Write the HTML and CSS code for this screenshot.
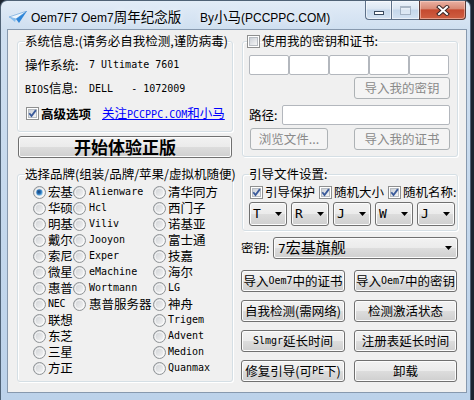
FILE: index.html
```html
<!DOCTYPE html>
<html lang="zh-CN">
<head>
<meta charset="utf-8">
<title>Oem7F7 Oem7周年纪念版</title>
<link rel="stylesheet" href="styles.css">
</head>
<body>
<svg class="defs" aria-hidden="true">
  <defs>
    <linearGradient id="cbIn" x1="0" y1="0" x2="1" y2="1"><stop offset="0" stop-color="#c9ced5"/><stop offset="1" stop-color="#f7f7f7"/></linearGradient>
    <linearGradient id="rdIn" x1="0" y1="0" x2="1" y2="1"><stop offset="0" stop-color="#c9ccd0"/><stop offset="1" stop-color="#fbfbfb"/></linearGradient>
    <radialGradient id="rdDot" cx="0.4" cy="0.4" r="0.65"><stop offset="0" stop-color="#173f73"/><stop offset="0.55" stop-color="#2b78bf"/><stop offset="1" stop-color="#a6dbf7"/></radialGradient>
    <symbol id="cb" viewBox="0 0 13 13">
      <rect x="0.5" y="0.5" width="12" height="12" fill="#fff" stroke="#8e8f8f"/>
      <rect x="2.5" y="2.5" width="8" height="8" fill="url(#cbIn)" stroke="#b7bcc2"/>
    </symbol>
    <symbol id="cbOn" viewBox="0 0 13 13">
      <rect x="0.5" y="0.5" width="12" height="12" fill="#fff" stroke="#8e8f8f"/>
      <rect x="2.5" y="2.5" width="8" height="8" fill="url(#cbIn)" stroke="#b7bcc2"/>
      <path d="M3.3 6.3 L5.5 9.1 L9.9 3.1" fill="none" stroke="#3a5a9a" stroke-width="1.8"/>
    </symbol>
    <symbol id="rd" viewBox="0 0 13 13">
      <circle cx="6.5" cy="6.5" r="6" fill="url(#rdIn)" stroke="#8f9396"/>
      <circle cx="6.5" cy="6.5" r="4.4" fill="none" stroke="#ffffff" stroke-opacity="0.75"/>
    </symbol>
    <symbol id="rdOn" viewBox="0 0 13 13">
      <circle cx="6.5" cy="6.5" r="6" fill="url(#rdIn)" stroke="#8f9396"/>
      <circle cx="6.5" cy="6.5" r="4.4" fill="none" stroke="#ffffff" stroke-opacity="0.75"/>
      <circle cx="6.5" cy="6.5" r="3.2" fill="url(#rdDot)"/>
    </symbol>
  </defs>
</svg>

<div class="window">
  <div class="titlebar">
    <svg class="app-icon" viewBox="0 0 18 12">
      <polygon points="0,6 18,0 7,8" fill="#eef6fd" stroke="#5a9ad6" stroke-width="0.6"/>
      <polygon points="7,8 18,0 10,12" fill="#2f86d8"/>
      <polygon points="0,6 7,8 6,11" fill="#86bcec"/>
    </svg>
    <span class="title">Oem7F7 Oem7<span class="tc">周年纪念版</span></span>
    <span class="author">By<span class="tc">小马</span>(PCCPPC.COM)</span>
    <div class="caption">
      <div class="cbtn cmin"><span class="g-min"></span></div>
      <div class="cbtn cmax"><span class="g-max"></span></div>
      <div class="cbtn cclose">
        <svg class="g-close" viewBox="0 0 14 11">
          <path d="M3 2 L11 9 M11 2 L3 9" stroke="#3a2626" stroke-width="4" stroke-linecap="square"/>
          <path d="M3 2 L11 9 M11 2 L3 9" stroke="#ffffff" stroke-width="2" stroke-linecap="square"/>
        </svg>
      </div>
    </div>
  </div>

  <div class="client">
    <div class="col">
      <fieldset class="group g-sys">
        <legend>系统信息:(请务必自我检测,谨防病毒)</legend>
        <div class="info-row"><span class="lbl">操作系统:</span><span class="m">7 Ultimate 7601</span></div>
        <div class="info-row"><span class="lbl"><span class="m">BIOS</span>信息:</span><span class="m pre">DELL   - 1072009</span></div>
        <div class="info-row adv-row">
          <svg class="chk"><use href="#cbOn"/></svg>
          <span class="adv">高级选项</span>
          <a class="link" href="#">关注<span class="m">PCCPPC.COM</span>和小马</a>
        </div>
      </fieldset>

      <button class="btn btn-start">开始体验正版</button>

      <fieldset class="group g-brand">
        <legend>选择品牌(组装/品牌/苹果/虚拟机随便)</legend>
        <div class="brands">
          <div class="bcol c1">
            <div class="bitem"><svg class="rad"><use href="#rdOn"/></svg>宏基</div>
            <div class="bitem"><svg class="rad"><use href="#rd"/></svg>华硕</div>
            <div class="bitem"><svg class="rad"><use href="#rd"/></svg>明基</div>
            <div class="bitem"><svg class="rad"><use href="#rd"/></svg>戴尔</div>
            <div class="bitem"><svg class="rad"><use href="#rd"/></svg>索尼</div>
            <div class="bitem"><svg class="rad"><use href="#rd"/></svg>微星</div>
            <div class="bitem"><svg class="rad"><use href="#rd"/></svg>惠普</div>
            <div class="bitem"><svg class="rad"><use href="#rd"/></svg><span class="m">NEC</span></div>
            <div class="bitem"><svg class="rad"><use href="#rd"/></svg>联想</div>
            <div class="bitem"><svg class="rad"><use href="#rd"/></svg>东芝</div>
            <div class="bitem"><svg class="rad"><use href="#rd"/></svg>三星</div>
            <div class="bitem"><svg class="rad"><use href="#rd"/></svg>方正</div>
          </div>
          <div class="bcol c2">
            <div class="bitem"><svg class="rad"><use href="#rd"/></svg><span class="m">Alienware</span></div>
            <div class="bitem"><svg class="rad"><use href="#rd"/></svg><span class="m">Hcl</span></div>
            <div class="bitem"><svg class="rad"><use href="#rd"/></svg><span class="m">Viliv</span></div>
            <div class="bitem"><svg class="rad"><use href="#rd"/></svg><span class="m">Jooyon</span></div>
            <div class="bitem"><svg class="rad"><use href="#rd"/></svg><span class="m">Exper</span></div>
            <div class="bitem"><svg class="rad"><use href="#rd"/></svg><span class="m">eMachine</span></div>
            <div class="bitem"><svg class="rad"><use href="#rd"/></svg><span class="m">Wortmann</span></div>
            <div class="bitem"><svg class="rad"><use href="#rd"/></svg>惠普服务器</div>
          </div>
          <div class="bcol c3">
            <div class="bitem"><svg class="rad"><use href="#rd"/></svg>清华同方</div>
            <div class="bitem"><svg class="rad"><use href="#rd"/></svg>西门子</div>
            <div class="bitem"><svg class="rad"><use href="#rd"/></svg>诺基亚</div>
            <div class="bitem"><svg class="rad"><use href="#rd"/></svg>富士通</div>
            <div class="bitem"><svg class="rad"><use href="#rd"/></svg>技嘉</div>
            <div class="bitem"><svg class="rad"><use href="#rd"/></svg>海尔</div>
            <div class="bitem"><svg class="rad"><use href="#rd"/></svg><span class="m">LG</span></div>
            <div class="bitem"><svg class="rad"><use href="#rd"/></svg>神舟</div>
            <div class="bitem"><svg class="rad"><use href="#rd"/></svg><span class="m">Trigem</span></div>
            <div class="bitem"><svg class="rad"><use href="#rd"/></svg><span class="m">Advent</span></div>
            <div class="bitem"><svg class="rad"><use href="#rd"/></svg><span class="m">Medion</span></div>
            <div class="bitem"><svg class="rad"><use href="#rd"/></svg><span class="m">Quanmax</span></div>
          </div>
        </div>
      </fieldset>
    </div>

    <div class="col">
      <fieldset class="group g-key">
        <legend class="chk-legend"><svg class="chk"><use href="#cb"/></svg>使用我的密钥和证书:</legend>
        <div class="key-boxes">
          <span class="kbox"></span><span class="kbox"></span><span class="kbox"></span><span class="kbox"></span><span class="kbox"></span>
        </div>
        <div class="row-end">
          <button class="btn dis w96" disabled>导入我的密钥</button>
        </div>
        <div class="path-row">
          <span>路径:</span>
          <span class="tbox"></span>
        </div>
        <div class="file-row">
          <button class="btn dis w78" disabled>浏览文件...</button>
          <button class="btn dis w96" disabled>导入我的证书</button>
        </div>
      </fieldset>

      <fieldset class="group g-boot">
        <legend>引导文件设置:</legend>
        <div class="opt-row">
          <span class="opt"><svg class="chk"><use href="#cbOn"/></svg>引导保护</span>
          <span class="opt"><svg class="chk"><use href="#cbOn"/></svg>随机大小</span>
          <span class="opt"><svg class="chk"><use href="#cbOn"/></svg>随机名称:</span>
        </div>
        <div class="combo-row">
          <span class="combo small"><span class="mc">T</span><span class="arrow"></span></span>
          <span class="combo small"><span class="mc">R</span><span class="arrow"></span></span>
          <span class="combo small"><span class="mc">J</span><span class="arrow"></span></span>
          <span class="combo small"><span class="mc">W</span><span class="arrow"></span></span>
          <span class="combo small"><span class="mc">J</span><span class="arrow"></span></span>
        </div>
      </fieldset>

      <div class="key-row">
        <span>密钥:</span>
        <span class="combo key"><span><span class="mc">7</span>宏基旗舰</span><span class="arrow"></span></span>
      </div>

      <div class="btn-grid">
        <button class="btn">导入<span class="m">Oem7</span>中的证书</button>
        <button class="btn">导入<span class="m">Oem7</span>中的密钥</button>
        <button class="btn">自我检测(需网络)</button>
        <button class="btn">检测激活状态</button>
        <button class="btn"><span class="m">Slmgr</span>延长时间</button>
        <button class="btn">注册表延长时间</button>
        <button class="btn">修复引导(可<span class="m">PE</span>下)</button>
        <button class="btn">卸载</button>
      </div>
    </div>
  </div>
</div>
</body>
</html>
```

FILE: styles.css
```css
* { box-sizing: border-box; }

html, body { margin: 0; padding: 0; }

body {
  width: 474px;
  height: 400px;
  overflow: hidden;
  background: #1c2530;
  font-family: "Noto Sans CJK SC", sans-serif;
  font-size: 12.5px;
  line-height: 16px;
  color: #000;
}

.defs { position: absolute; width: 0; height: 0; overflow: hidden; }

.window {
  width: 471px;
  height: 400px;
  display: flex;
  flex-direction: column;
  padding: 0 3px 7px 6px;
  border: 1px solid #4f6276;
  border-bottom: none;
  border-radius: 7px 7px 0 0;
  background: linear-gradient(180deg, #e2ecf7 0, #cfdff0 28px, #c3d7ec 60%, #bcd2ea 100%);
}

/* title bar */
.titlebar {
  height: 28px;
  flex: none;
  display: flex;
  align-items: flex-start;
}
.app-icon { width: 18px; height: 12px; margin: 10px 0 0 2px; flex: none; }
.title {
  width: 169px;
  margin: 7px 0 0 4px;
  font-family: "Liberation Sans", "Noto Sans CJK SC", sans-serif;
  font-size: 12px;
  line-height: 16px;
  color: #000;
  text-shadow: 0 0 6px rgba(255,255,255,0.9);
  white-space: nowrap;
}
.author {
  margin-top: 7px;
  font-family: "Liberation Sans", "Noto Sans CJK SC", sans-serif;
  font-size: 12px;
  line-height: 16px;
  text-shadow: 0 0 6px rgba(255,255,255,0.9);
  white-space: nowrap;
}
.tc { font-family: "Noto Sans CJK SC", sans-serif; font-size: 13.5px; }

.caption { margin-left: auto; margin-right: 1px; display: flex; }
.cbtn {
  height: 19px;
  display: flex;
  align-items: center;
  justify-content: center;
  border: 1px solid #5e7189;
  border-top: none;
  background: linear-gradient(180deg, #edf3fa 0, #dbe6f2 45%, #c5d7eb 50%, #d3e2f2 100%);
  box-shadow: inset 0 0 0 1px rgba(255,255,255,0.55);
}
.cmin { width: 26px; border-right: none; border-radius: 0 0 0 4px; }
.cmax { width: 28px; border-right: none; }
.cclose {
  width: 47px;
  border-radius: 0 0 4px 0;
  border-color: #5a3a36;
  background: linear-gradient(180deg, #eab1a3 0, #d98a76 42%, #c54a30 50%, #cf5f42 100%);
  box-shadow: inset 0 0 0 1px rgba(255,220,210,0.5);
}
.g-min {
  width: 10px; height: 4px; margin-top: 6px;
  background: #fff; border: 1px solid #3a4b60;
}
.g-max {
  width: 11px; height: 9px;
  border: 1px solid rgba(90,110,135,0.45);
  border-top-width: 2px;
  background: rgba(255,255,255,0.35);
}
.g-close { width: 14px; height: 11px; }

/* client */
.client {
  flex: 1;
  background: #f0f0f0;
  border: 1px solid #8799ae;
  display: grid;
  grid-template-columns: 216px 217px;
  column-gap: 8px;
  align-content: start;
  padding: 3px 8px 0 9px;
}
.col { display: flex; flex-direction: column; min-width: 0; }

.group {
  margin: 0;
  min-width: 0;
  border: 1px solid #d5dfe5;
  border-radius: 3px;
  box-shadow: inset 1px 1px 0 #fff, 1px 1px 0 #fff;
}
.group legend { padding: 0; height: 16px; line-height: 16px; white-space: nowrap; }

.m { font-family: "DejaVu Sans Mono", monospace; font-size: 10px; }
.pre { white-space: pre; }
.mc { font-family: "DejaVu Sans Mono", monospace; font-size: 13px; }

/* system info */
.g-sys { padding: 4px 0 5px 7px; }
.info-row { height: 24px; display: flex; align-items: center; white-space: nowrap; }
.info-row.adv-row { height: 25px; }
.lbl { width: 64px; flex: none; }
.chk { width: 13px; height: 13px; flex: none; }
.adv-row .chk { margin-left: 1px; }
.adv { font-weight: bold; margin-left: 2px; }
.link { margin-left: 11px; color: #0000ff; text-decoration: underline; }

/* buttons */
.btn {
  font: inherit;
  color: #000;
  height: 22px;
  padding: 0;
  margin: 0;
  border: 1px solid #707070;
  border-radius: 3px;
  background: linear-gradient(180deg, #f2f2f2 0, #ebebeb 50%, #dddddd 50%, #cfcfcf 100%);
  box-shadow: inset 0 0 0 1px #fcfcfc;
  display: flex;
  align-items: center;
  justify-content: center;
  white-space: nowrap;
  line-height: 16px;
  overflow: visible;
}
.btn.dis {
  color: #8a8a8a;
  border-color: #adb2b5;
  background: #f4f4f4;
  box-shadow: none;
}
.w96 { width: 96px; }
.w78 { width: 78px; }

.btn-start {
  margin: 4px 1px 0;
  font-size: 17px;
  font-weight: bold;
  line-height: 20px;
}

/* brands */
.g-brand { margin-top: 8px; padding: 2px 0 5px 7px; }
.brands {
  display: grid;
  grid-template-columns: 40px 80px 1fr;
  padding-left: 8px;
  align-items: start;
}
.bcol { display: flex; flex-direction: column; }
.bitem { height: 16px; line-height: 14px; display: flex; align-items: center; gap: 2px; white-space: nowrap; }
.c1 .bitem { letter-spacing: -0.3px; }
.c2 .bitem { gap: 3px; }
.rad { width: 13px; height: 13px; flex: none; }

/* right column */
.g-key { margin-left: 1px; padding: 6px 7px 6px 6px; }
.chk-legend { display: flex; align-items: center; gap: 2px; margin-left: -2px; }
.key-boxes { display: flex; }
.kbox {
  width: 40px; height: 20px;
  background: #fff;
  border: 1px solid #b3b7bd;
  border-radius: 2px;
}
.row-end { display: flex; justify-content: flex-end; margin-top: 2px; }
.path-row { display: flex; align-items: center; gap: 5px; margin-top: 6px; height: 20px; }
.tbox {
  flex: 1;
  height: 20px;
  background: #fff;
  border: 1px solid #b3b7bd;
  border-radius: 2px;
}
.file-row { display: flex; justify-content: space-between; margin-top: 3px; padding-left: 1px; }

.g-boot { margin-left: 1px; margin-top: 9px; padding: 2px 2px 4px 6px; }
.opt-row { display: flex; height: 16px; align-items: center; gap: 4px; padding-left: 1px; white-space: nowrap; }
.opt { display: flex; align-items: center; gap: 2px; }
.combo-row { display: flex; gap: 4px; margin-top: 2px; }

.combo {
  height: 24px;
  display: flex;
  align-items: center;
  justify-content: space-between;
  border: 1px solid #707070;
  border-radius: 3px;
  background: linear-gradient(180deg, #f2f2f2 0, #ebebeb 50%, #dddddd 50%, #cfcfcf 100%);
  box-shadow: inset 0 0 0 1px #fcfcfc;
  white-space: nowrap;
}
.combo.small { width: 38px; padding: 0 4px 0 3px; }
.arrow {
  width: 7px; height: 4px; flex: none;
  background: #000;
  clip-path: polygon(0 0, 100% 0, 50% 100%);
}

.key-row { display: flex; align-items: center; margin-top: 6px; height: 22px; }
.combo.key {
  margin-left: auto;
  width: 185px;
  height: 22px;
  padding: 0 5px 0 4px;
  font-size: 15px;
  line-height: 18px;
}

.btn-grid {
  display: grid;
  grid-template-columns: 104px 103px;
  grid-auto-rows: 22px;
  column-gap: 9px;
  row-gap: 8px;
  margin-top: 11px;
}
```
